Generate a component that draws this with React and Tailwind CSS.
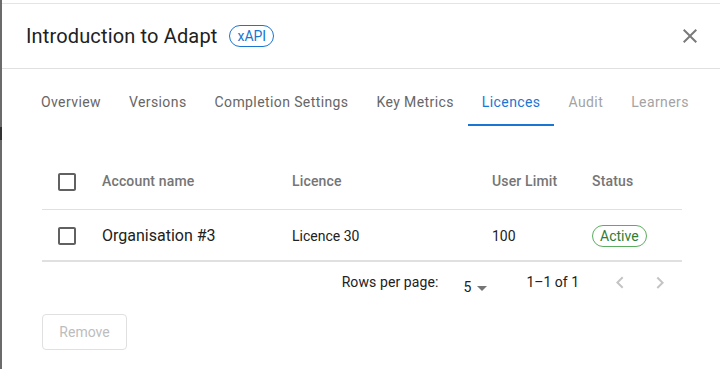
import React from "react";

const CheckboxIcon = () => (
  <svg width="24" height="24" viewBox="0 0 24 24" className="text-[#616161]" fill="currentColor">
    <path d="M19 5v14H5V5h14m0-2H5c-1.1 0-2 .9-2 2v14c0 1.1.9 2 2 2h14c1.1 0 2-.9 2-2V5c0-1.1-.9-2-2-2z" />
  </svg>
);

const tabs = [
  { label: "Overview", state: "normal" },
  { label: "Versions", state: "normal" },
  { label: "Completion Settings", state: "normal" },
  { label: "Key Metrics", state: "normal" },
  { label: "Licences", state: "active" },
  { label: "Audit", state: "disabled" },
  { label: "Learners", state: "disabled" },
];

export default function App() {
  return (
    <div
      className="flex w-[720px] h-[369px] overflow-hidden bg-white"
      style={{ fontFamily: "Roboto, 'Liberation Sans', sans-serif" }}
    >
      <div className="w-[2px] shrink-0 bg-[#6b6b6b] flex flex-col">
        <div className="mt-[127px] h-[13px] bg-[#333333]" />
      </div>
      <div className="flex-1 flex flex-col pt-[3px]">
        <div className="border-t border-[#e4e4e4] flex flex-col">
          {/* Header */}
          <div className="flex items-center h-[65px] pl-[24px] pr-[18px] border-b border-[#e0e0e0]">
            <div className="text-[20px] leading-[32px] text-[#212121] tracking-[0.15px]">
              Introduction to Adapt
            </div>
            <div className="ml-[12px] h-[22px] px-[7px] flex items-center rounded-full border border-[#1976d2] text-[#1976d2] text-[14px] leading-none">
              xAPI
            </div>
            <div className="ml-auto w-[24px] h-[24px]">
              <svg width="24" height="24" viewBox="0 0 24 24" fill="#7a7a7a">
                <path d="M19 6.41L17.59 5 12 10.59 6.41 5 5 6.41 10.59 12 5 17.59 6.41 19 12 13.41 17.59 19 19 17.59 13.41 12z" />
              </svg>
            </div>
          </div>

          {/* Tabs */}
          <div className="flex mt-[9px] pl-[25px]">
            {tabs.map((t) => (
              <div
                key={t.label}
                className={
                  "relative h-[48px] px-[14px] flex items-center text-[14px] leading-[20px] tracking-[0.4px] whitespace-nowrap " +
                  (t.state === "active"
                    ? "text-[#1976d2]"
                    : t.state === "disabled"
                    ? "text-[#a3a3a3]"
                    : "text-[#666666]")
                }
              >
                {t.label}
                {t.state === "active" && (
                  <div className="absolute left-0 right-0 bottom-0 h-[2px] bg-[#1976d2]" />
                )}
              </div>
            ))}
          </div>

          {/* Table */}
          <div className="mt-[28px] ml-[40px] w-[640px]">
            <div className="grid grid-cols-[60px_190px_200px_100px_90px] h-[56px] items-center border-b border-[#e0e0e0]">
              <div className="pl-[13px] flex items-center">
                <CheckboxIcon />
              </div>
              <div className="text-[14px] font-medium text-[#757575] tracking-[0.15px]">Account name</div>
              <div className="text-[14px] font-medium text-[#757575] tracking-[0.15px]">Licence</div>
              <div className="text-[14px] font-medium text-[#757575] tracking-[0.15px]">User Limit</div>
              <div className="text-[14px] font-medium text-[#757575] tracking-[0.15px]">Status</div>
            </div>
            <div className="grid grid-cols-[60px_190px_200px_100px_90px] h-[52px] pt-[2px] items-center border-b-2 border-[#e0e0e0]">
              <div className="pl-[13px] flex items-center">
                <CheckboxIcon />
              </div>
              <div className="text-[16px] text-[#212121]">Organisation #3</div>
              <div className="text-[14px] text-[#212121]">Licence 30</div>
              <div className="text-[14px] text-[#212121]">100</div>
              <div>
                <span className="inline-flex items-center h-[22px] px-[7px] rounded-full border border-[#5cae5f] text-[#2e7d32] text-[14px] leading-none">
                  Active
                </span>
              </div>
            </div>

            {/* Pagination */}
            <div className="flex justify-end items-start h-[52px] pr-[2px] text-[14px] text-[#212121]">
              <div className="pt-[10px] leading-[20px] tracking-[0.1px]">Rows per page:</div>
              <div className="ml-[25px] pt-[14px] flex items-start">
                <span className="leading-[20px] pt-[1px]">5</span>
                <svg width="24" height="24" viewBox="0 0 24 24" fill="#757575" className="-ml-[1px]">
                  <path d="M7 10l5 5 5-5z" />
                </svg>
              </div>
              <div className="ml-[32px] pt-[10px] leading-[20px]">1–1 of 1</div>
              <div className="ml-[21px] pt-[1px] flex">
                <div className="w-[40px] h-[40px] flex items-center justify-center">
                  <svg width="24" height="24" viewBox="0 0 24 24" fill="#c4c4c4">
                    <path d="M15.41 16.09l-4.58-4.59 4.58-4.59L14 5.5l-6 6 6 6z" />
                  </svg>
                </div>
                <div className="w-[40px] h-[40px] flex items-center justify-center">
                  <svg width="24" height="24" viewBox="0 0 24 24" fill="#c4c4c4">
                    <path d="M8.59 16.34l4.58-4.59-4.58-4.59L10 5.75l6 6-6 6z" />
                  </svg>
                </div>
              </div>
            </div>

            <div className="flex">
              <div className="w-[85px] h-[36px] flex items-center justify-center rounded-[4px] border border-[#e0e0e0] text-[14px] text-[#bdbdbd]">
                Remove
              </div>
            </div>
          </div>
        </div>
      </div>
    </div>
  );
}
